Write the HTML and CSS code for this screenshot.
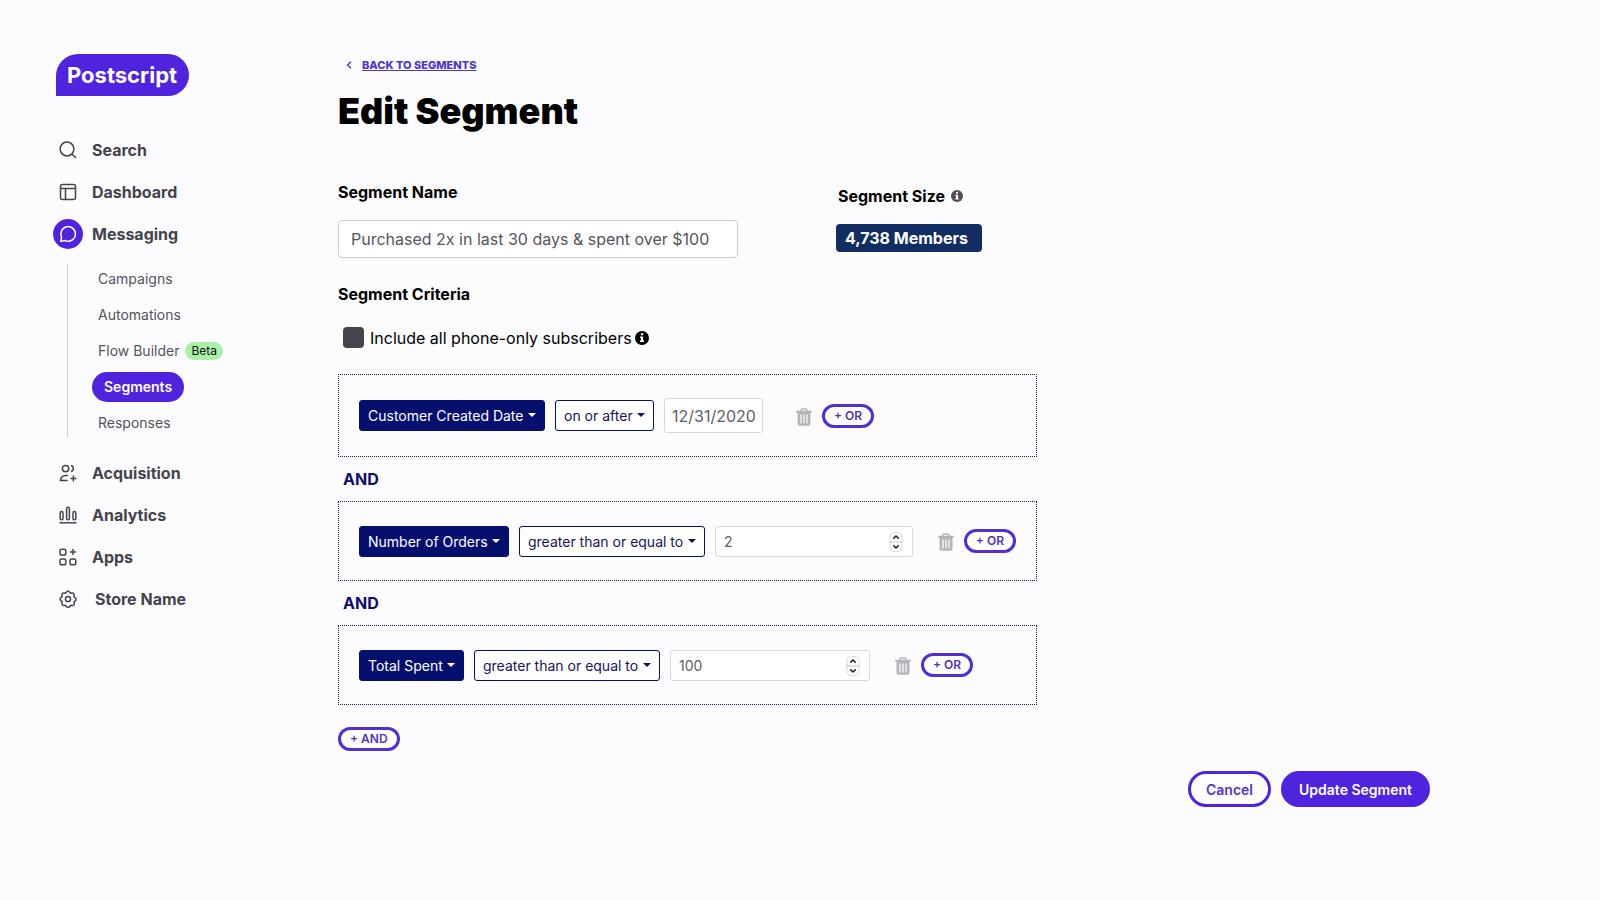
FILE: index.html
```html
<!DOCTYPE html>
<html lang="en">
<head>
  <meta charset="UTF-8">
  <meta name="viewport" content="width=device-width, initial-scale=1">
  <title>Edit Segment</title>
  <link rel="stylesheet" href="styles.css">
</head>
<body>

  <!-- shared icons -->
  <svg class="sprite" aria-hidden="true">
    <symbol id="info" viewBox="0 0 16 16">
      <circle cx="8" cy="8" r="8" fill="currentColor"/>
      <path fill="#fff" d="M6.7 2.6h2.6v2.3H6.7zM5.8 6.3h3.5v4.6h1v1.8H5.700v-1.800h1V8h-.9z"/>
    </symbol>
    <symbol id="trash" viewBox="0 0 16 18">
      <path fill="none" stroke="currentColor" stroke-width="1.4" d="M5 3V2.2Q5 1 6.2 1h3.6Q11 1 11 2.2V3"/>
      <path fill="currentColor" d="M0 2.8h16v1.800H0zM1.500 4.600h13v11.200q0 2-2 2h-9q-2 0-2-2z"/>
      <path stroke="#fff" stroke-width="1.2" d="M5 6.500v9M8 6.500v9M11 6.500v9"/>
    </symbol>
    <symbol id="stepper" viewBox="0 0 14 20">
      <rect x="1" y=".5" width="12" height="19" rx="4" fill="#fff" stroke="#dcdce0"/>
      <path stroke="#c4c4ca" d="M0 10h14"/>
      <path fill="none" stroke="#222" stroke-width="1.500" d="M4.300 6.600 7 4l2.700 2.600M4.300 13.400 7 16l2.700-2.600"/>
    </symbol>
  </svg>

  <div class="layout">
    <aside class="sidebar">
      <a class="logo" href="#">Postscript</a>

      <nav class="nav">
        <a class="nav-item" href="#">
          <span class="nav-icon"><svg viewBox="0 0 18 18"><circle cx="8" cy="8" r="6.9"/><path d="m13 13 4 4"/></svg></span>
          Search
        </a>
        <a class="nav-item" href="#">
          <span class="nav-icon"><svg viewBox="0 0 18 18"><rect x="1.5" y="1.5" width="15" height="15" rx="2"/><path d="M1.5 5.5h15M6.5 5.500v11"/></svg></span>
          Dashboard
        </a>
        <a class="nav-item active" href="#">
          <span class="nav-icon"><svg viewBox="0 0 18 18"><path d="M1.800 16.400 2.600 12.200A7.300 7.300 0 1 1 6.200 15.600Z"/></svg></span>
          Messaging
        </a>

        <div class="subnav">
          <a href="#">Campaigns</a>
          <a href="#">Automations</a>
          <a href="#">Flow Builder <span class="beta">Beta</span></a>
          <a class="current" href="#">Segments</a>
          <a href="#">Responses</a>
        </div>

        <a class="nav-item" href="#">
          <span class="nav-icon"><svg viewBox="0 0 18 18"><circle cx="6.600" cy="4.600" r="3.200"/><path d="M12 1.600a3.100 3.100 0 0 1 0 6M9 11.600H6.200Q2.600 11.800 1.400 16.400h7.200M14.400 11.400v6M11.400 14.400h6"/></svg></span>
          Acquisition
        </a>
        <a class="nav-item" href="#">
          <span class="nav-icon"><svg viewBox="0 0 18 18"><rect x="1.200" y="5.600" width="2.800" height="8.200" rx="1.300"/><rect x="7.600" y="1.200" width="2.800" height="12.600" rx="1.300"/><rect x="14" y="5.600" width="2.800" height="8.200" rx="1.300"/><path d="M.5 16.800h17"/></svg></span>
          Analytics
        </a>
        <a class="nav-item" href="#">
          <span class="nav-icon"><svg viewBox="0 0 18 18"><rect x="1" y="1.200" width="5.800" height="5.800" rx="1.800"/><rect x="1" y="11" width="5.800" height="5.800" rx="1.800"/><rect x="11" y="11" width="5.800" height="5.800" rx="1.800"/><path d="M14 1v6M11 4h6"/></svg></span>
          Apps
        </a>
        <a class="nav-item store" href="#">
          <span class="nav-icon"><svg viewBox="0 0 18 18"><circle cx="9" cy="9" r="2.600"/><path stroke-linejoin="round" d="M7.200 2.300Q9-.5 10.800 2.300l.6.900 1.100-.2q3.100-.4 2.500 2.600l-.2 1.100.9.600q2.600 1.700.4 3.500l-1 .8.100 1.200q.4 3-2.500 2.700l-1-.2-.7 1Q9.400 18.500 7.200 16.300l-.7-1-1 .2q-2.900.3-2.500-2.700l.100-1.200-1-.8Q-.1 9 2.300 7.300l.9-.6L3 5.600Q2.400 2.600 5.500 3l1.100.2z"/></svg></span>
          Store Name
        </a>
      </nav>
    </aside>

    <main class="main">
      <div class="back">
        <svg viewBox="0 0 6 8"><path d="M5 .7 1.500 4 5 7.300"/></svg>
        <a href="#">BACK TO SEGMENTS</a>
      </div>
      <h1>Edit Segment</h1>

      <form>
        <div class="top-row">
          <div class="name-field">
            <label for="segment-name">Segment Name</label>
            <input id="segment-name" type="text" value="Purchased 2x in last 30 days &amp; spent over $100">
          </div>
          <div class="size-field">
            <div class="size-title">Segment Size <svg class="info"><use href="#info"/></svg></div>
            <div class="members">4,738 Members</div>
          </div>
        </div>

        <h2>Segment Criteria</h2>
        <div class="check-row">
          <input id="phone-only" type="checkbox">
          <label for="phone-only">Include all phone-only subscribers</label>
          <svg class="info"><use href="#info"/></svg>
        </div>

        <div class="criteria">
          <div class="rule rule-date">
            <select class="field" aria-label="Property"><option>Customer Created Date</option></select>
            <select class="operator" aria-label="Operator"><option>on or after</option></select>
            <input class="date" type="text" value="12/31/2020" aria-label="Date">
            <button class="trash" type="button" aria-label="Delete"><svg><use href="#trash"/></svg></button>
            <button class="pill" type="button">+ OR</button>
          </div>
          <div class="and">AND</div>
          <div class="rule">
            <select class="field" aria-label="Property"><option>Number of Orders</option></select>
            <select class="operator" aria-label="Operator"><option>greater than or equal to</option></select>
            <div class="number">
              <input type="number" value="2" aria-label="Orders">
              <svg><use href="#stepper"/></svg>
            </div>
            <button class="trash" type="button" aria-label="Delete"><svg><use href="#trash"/></svg></button>
            <button class="pill" type="button">+ OR</button>
          </div>
          <div class="and">AND</div>
          <div class="rule">
            <select class="field" aria-label="Property"><option>Total Spent</option></select>
            <select class="operator" aria-label="Operator"><option>greater than or equal to</option></select>
            <div class="number">
              <input type="number" value="100" aria-label="Amount">
              <svg><use href="#stepper"/></svg>
            </div>
            <button class="trash" type="button" aria-label="Delete"><svg><use href="#trash"/></svg></button>
            <button class="pill" type="button">+ OR</button>
          </div>
        </div>
        <button class="pill add-and" type="button">+ AND</button>

        <div class="actions">
          <button class="btn btn-cancel" type="button">Cancel</button>
          <button class="btn btn-update" type="submit">Update Segment</button>
        </div>
      </form>
    </main>
  </div>

</body>
</html>
```

FILE: styles.css
```css
* {
  box-sizing: border-box;
}

body {
  margin: 0;
  min-height: 100vh;
  background: #fcfcff;
  color: #000;
  font-family: Inter, "Liberation Sans", sans-serif;
  font-size: 16px;
  line-height: 20px;
}

input, select, button {
  margin: 0;
  font-family: inherit;
}

.sprite {
  display: none;
}

.layout {
  display: flex;
}

/* sidebar */
.sidebar {
  flex: none;
  width: 338px;
  padding: 54px 48px 40px 53px;
}

.logo {
  display: inline-block;
  margin-left: 3px;
  padding: 0 12px 0 11px;
  border-radius: 22px 21px 21px 0;
  background: #5024de;
  color: #fff;
  font-size: 22px;
  font-weight: 700;
  line-height: 42px;
  text-decoration: none;
}

.nav {
  margin-top: 33px;
}

.nav-item {
  display: flex;
  align-items: center;
  gap: 9px;
  height: 42px;
  color: #45444c;
  font-weight: 700;
  text-decoration: none;
}

.nav-item.store {
  gap: 12px;
}

.nav-icon {
  display: flex;
  align-items: center;
  justify-content: center;
  width: 30px;
  height: 30px;
  border-radius: 50%;
}

.nav-icon svg {
  width: 18px;
  height: 18px;
  fill: none;
  stroke: currentColor;
  stroke-width: 1.5;
}

.active .nav-icon {
  background: #5024de;
  color: #fff;
}

.subnav {
  display: flex;
  flex-direction: column;
  align-items: flex-start;
  gap: 6px;
  margin: 9px 0 14px 14px;
  border-left: 1px solid #d0d0d5;
  padding-left: 24px;
}

.subnav a {
  display: flex;
  align-items: center;
  gap: 6px;
  height: 30px;
  padding-left: 6px;
  color: #55545b;
  font-size: 14px;
  text-decoration: none;
}

.subnav a.current {
  padding: 0 12px;
  border-radius: 15px;
  background: #5024de;
  color: #fff;
  font-weight: 600;
}

.beta {
  padding: 0 6px;
  border-radius: 9px;
  background: #a9f0a9;
  color: #111;
  font-size: 12px;
  line-height: 18px;
}

/* main column */
.main {
  flex: 1;
  min-width: 0;
  padding: 55px 170px 40px 0;
}

.back {
  display: flex;
  align-items: center;
  gap: 10px;
  padding-left: 8px;
  font-size: 11px;
  font-weight: 800;
}

.back a {
  color: #5433cc;
}

.back svg {
  width: 6px;
  height: 8px;
  fill: none;
  stroke: #5433cc;
  stroke-width: 1.4;
}

h1 {
  margin: 14px 0 0;
  font-size: 36px;
  font-weight: 900;
  line-height: 44px;
}

h2 {
  margin: 26px 0 0;
  font-size: 16px;
  font-weight: 700;
  line-height: 20px;
}

.top-row {
  display: flex;
  flex-wrap: wrap;
  gap: 98px;
  margin-top: 49px;
}

.name-field {
  display: flex;
  flex-direction: column;
  gap: 18px;
  flex: 0 1 400px;
}

.name-field label, .size-title {
  font-weight: 700;
}

.name-field input {
  width: 100%;
  height: 38px;
  padding: 0 12px;
  border: 1px solid #ccccd2;
  border-radius: 4px;
  background: #fff;
  color: #55555a;
  font-size: 16px;
}

.size-field {
  margin-top: 4px;
}

.size-title {
  display: flex;
  align-items: center;
  gap: 6px;
  margin-left: 2px;
}

.info {
  flex: none;
  width: 14px;
  height: 14px;
}

.size-title .info {
  width: 12px;
  height: 12px;
  color: #505055;
}

.members {
  margin-top: 18px;
  padding: 0 14px 0 9px;
  border-radius: 4px;
  background: #122d61;
  color: #fff;
  font-weight: 700;
  line-height: 28px;
}

.check-row {
  display: flex;
  align-items: center;
  gap: 6px;
  margin: 23px 0 26px;
  padding-left: 5px;
}

.check-row .info {
  margin-left: -3px;
}

.check-row input {
  appearance: none;
  width: 21px;
  height: 21px;
  border-radius: 4px;
  background: #45434d;
}

.check-row input:checked {
  background: #5024de;
}

/* rules */
.criteria {
  max-width: 699px;
}

.rule {
  display: flex;
  align-items: center;
  gap: 10px;
  min-height: 80px;
  padding: 0 20px;
  border: 1px dotted #22224a;
}

.rule-date {
  min-height: 83px;
}

.rule select {
  appearance: none;
  flex: none;
  height: 31px;
  padding: 0 20px 0 8px;
  border: 1px solid #05106e;
  border-radius: 3px;
  background: #fff url("data:image/svg+xml,%3Csvg xmlns='http://www.w3.org/2000/svg' width='8' height='4'%3E%3Cpath fill='%23140f5c' d='M0 0h8L4 4z'/%3E%3C/svg%3E") no-repeat right 8px top 12px;
  color: #17145a;
  font-size: 14px;
}

.rule select.field {
  background: #05106e url("data:image/svg+xml,%3Csvg xmlns='http://www.w3.org/2000/svg' width='8' height='4'%3E%3Cpath fill='%23fff' d='M0 0h8L4 4z'/%3E%3C/svg%3E") no-repeat right 8px top 12px;
  color: #fff;
}

.rule input {
  border: 1px solid #d8d8dd;
  border-radius: 3px;
  background: #fff;
  color: #606065;
}

.date {
  width: 99px;
  height: 35px;
  margin-right: 8px;
  padding: 0 7px;
  font-size: 16px;
}

.number {
  position: relative;
  flex: 0 1 200px;
}

.number input {
  appearance: textfield;
  width: 100%;
  height: 31px;
  padding: 0 8px;
  font-size: 14px;
}

.number input::-webkit-inner-spin-button {
  appearance: none;
}

.number svg {
  position: absolute;
  top: 6px;
  right: 10px;
  width: 14px;
  height: 20px;
  pointer-events: none;
}

.trash {
  display: flex;
  flex: none;
  margin-left: 15px;
  padding: 2px 0 0;
  border: 0;
  background: none;
  color: #b2b5ba;
  cursor: pointer;
}

.trash svg {
  width: 16px;
  height: 18px;
}

.pill {
  flex: none;
  height: 24px;
  padding: 0 9px;
  border: 3px solid #5230d0;
  border-radius: 12px;
  background: #fff;
  color: #5433bb;
  font-size: 12px;
  font-weight: 600;
  line-height: 18px;
  cursor: pointer;
}

.and {
  padding-left: 5px;
  color: #0b0f6b;
  font-weight: 700;
  line-height: 44px;
}

.add-and {
  margin-top: 22px;
}

.actions {
  display: flex;
  justify-content: flex-end;
  gap: 10px;
  margin-top: 20px;
}

.btn {
  height: 36px;
  padding: 0 15px;
  border: 3px solid #5024de;
  border-radius: 18px;
  font-size: 14px;
  font-weight: 600;
  cursor: pointer;
}

.btn-cancel {
  background: #fff;
  color: #5433cc;
}

.btn-update {
  background: #5024de;
  color: #fff;
}
```
